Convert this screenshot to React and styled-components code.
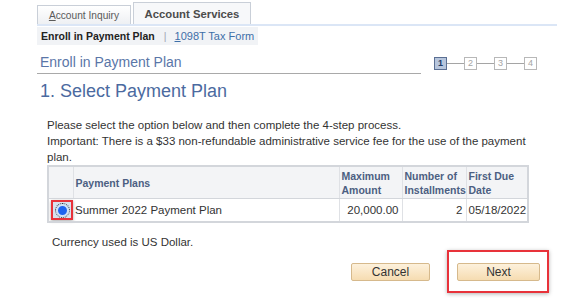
import React from "react";
import styled, { createGlobalStyle } from "styled-components";

const GlobalStyle = createGlobalStyle`
  html, body {
    margin: 0;
    padding: 0;
    background: #ffffff;
    font-family: "Liberation Sans", Arial, sans-serif;
  }
`;

const Page = styled.div`
  width: 580px;
  height: 298px;
  overflow: hidden;
  padding: 2px 0 0 37px;
  box-sizing: border-box;
`;

const TabBar = styled.div`
  display: flex;
  align-items: flex-end;
  gap: 2px;
  width: 520px;
  border-bottom: 2px solid #dbe6f6;
  height: 22px;
`;

const Tab = styled.div`
  box-sizing: border-box;
  width: ${p => p.w};
  height: ${p => (p.active ? "22px" : "19px")};
  display: flex;
  align-items: center;
  justify-content: center;
  border: 1px solid #c9cfd8;
  border-bottom: none;
  background: ${p => (p.active ? "#f7f8fa" : "linear-gradient(#ffffff, #eef0f3)")};
  font-size: ${p => (p.active ? "11.3px" : "10.2px")};
  font-weight: ${p => (p.active ? "bold" : "normal")};
  color: ${p => (p.active ? "#4c4c4c" : "#5a5a5a")};
  u { text-decoration: underline; }
`;

const SubNav = styled.div`
  display: inline-flex;
  align-items: center;
  height: 18px;
  padding: 0 4px;
  background: #f1f3f6;
  font-size: 10.5px;
  font-weight: bold;
  color: #222;
`;

const Sep = styled.span`
  color: #a0a8b4;
  font-weight: normal;
  margin: 0 8px 0 9px;
`;

const SubLink = styled.span`
  color: #3e6fa8;
  font-weight: normal;
  font-size: 11px;
  u { text-decoration: underline; }
`;

const TitleRow = styled.div`
  display: flex;
  align-items: flex-end;
  margin-top: 9px;
  width: 504px;
`;

const PageTitle = styled.div`
  width: 381px;
  padding: 0 0 3px 3px;
  border-bottom: 1px solid #a9a9a9;
  font-size: 14px;
  color: #5a76a8;
`;

const Steps = styled.div`
  display: flex;
  align-items: center;
  margin-left: 13px;
  margin-bottom: 4px;
`;

const Step = styled.div`
  box-sizing: border-box;
  width: 13px;
  height: 13px;
  border: 1px solid ${p => (p.active ? "#5b6f93" : "#b8b8b8")};
  background: ${p => (p.active ? "#b7c6dd" : "#ffffff")};
  color: ${p => (p.active ? "#223a66" : "#a5a5a5")};
  font-size: 9px;
  font-weight: ${p => (p.active ? "bold" : "normal")};
  display: flex;
  align-items: center;
  justify-content: center;
  line-height: 1;
`;

const Link = styled.div`
  width: 17px;
  height: 1px;
  background: #a5a5a5;
`;

const Heading = styled.h1`
  margin: 7px 0 0 3px;
  font-size: 18px;
  font-weight: normal;
  color: #4b6aa0;
`;

const Intro = styled.p`
  margin: 15px 0 0 10px;
  width: 490px;
  font-size: 11.5px;
  line-height: 16px;
  color: #333333;
`;

const Grid = styled.table`
  margin: 0 0 0 10px;
  border-collapse: collapse;
  table-layout: fixed;
  width: 482px;
  border: 2px solid #d3d6db;
`;

const Th = styled.th`
  background: #f3f4f6;
  border-left: 1px solid #dfe1e5;
  border-bottom: 1px solid #d3d6db;
  text-align: left;
  vertical-align: ${p => (p.low ? "middle" : "top")};
  padding: 2px 2px 1px;
  font-size: 10.5px;
  line-height: 14px;
  font-weight: bold;
  color: #4c5f82;
  height: 26px;
`;

const Td = styled.td`
  border-left: 1px solid #dfe1e5;
  height: 22px;
  color: #333333;
  font-size: 11.5px;
  text-align: ${p => (p.right ? "right" : "left")};
  padding: 0 ${p => (p.right ? "3px" : "2px")} 0 2px;
`;

const RadioCell = styled.td`
  padding: 0 0 0 2px;
  height: 22px;
`;

const RadioFocus = styled.div`
  box-sizing: border-box;
  width: 22px;
  height: 20px;
  border: 2px solid #e8323a;
  display: flex;
  align-items: center;
  justify-content: center;
  background: #d7e2ee;
  box-shadow: 0 1px 3px rgba(0, 0, 0, 0.35);
`;

const RadioDot = styled.div`
  box-sizing: border-box;
  width: 13px;
  height: 13px;
  border-radius: 50%;
  border: 2px solid #cfe0f6;
  background: #1e63ee;
  outline: 1px dotted #333;
`;

const Note = styled.div`
  margin: 13px 0 0 15px;
  font-size: 11.5px;
  color: #333333;
`;

const Actions = styled.div`
  display: flex;
  align-items: center;
  margin: 2px 0 0 314px;
`;

const Btn = styled.button`
  box-sizing: border-box;
  width: ${p => p.w};
  height: 18px;
  border: 1px solid #d6b98c;
  border-radius: 2px;
  background: linear-gradient(#fdf1dc, #f6dcb1);
  font-family: "Liberation Sans", Arial, sans-serif;
  font-size: 12px;
  color: #333333;
  padding: 0;
`;

const Highlight = styled.div`
  margin-left: 17px;
  padding: 10px 7px 10px 8px;
  border: 2px solid #e8323a;
  box-shadow: 0 1px 4px rgba(0, 0, 0, 0.3);
`;

const App = () => (
  <>
    <GlobalStyle />
    <Page>
      <TabBar>
        <Tab w="94px">
          <span><u>A</u>ccount Inquiry</span>
        </Tab>
        <Tab active w="118px">Account Services</Tab>
      </TabBar>
      <SubNav>
        Enroll in Payment Plan
        <Sep>|</Sep>
        <SubLink><u>1</u>098T Tax Form</SubLink>
      </SubNav>
      <TitleRow>
        <PageTitle>Enroll in Payment Plan</PageTitle>
        <Steps>
          <Step active>1</Step>
          <Link />
          <Step>2</Step>
          <Link />
          <Step>3</Step>
          <Link />
          <Step>4</Step>
        </Steps>
      </TitleRow>
      <Heading>1. Select Payment Plan</Heading>
      <Intro>
        Please select the option below and then complete the 4-step process.
        <br />
        Important: There is a $33 non-refundable administrative service fee for the use of the payment plan.
      </Intro>
      <Grid>
        <colgroup>
          <col style={{ width: "25px" }} />
          <col style={{ width: "266px" }} />
          <col style={{ width: "63px" }} />
          <col style={{ width: "64px" }} />
          <col />
        </colgroup>
        <thead>
          <tr>
            <Th style={{ borderLeft: "none" }} />
            <Th low>Payment Plans</Th>
            <Th>Maximum Amount</Th>
            <Th>Number of Installments</Th>
            <Th>First Due Date</Th>
          </tr>
        </thead>
        <tbody>
          <tr>
            <RadioCell>
              <RadioFocus>
                <RadioDot />
              </RadioFocus>
            </RadioCell>
            <Td style={{ borderLeft: "none" }}>Summer 2022 Payment Plan</Td>
            <Td right>20,000.00</Td>
            <Td right>2</Td>
            <Td>05/18/2022</Td>
          </tr>
        </tbody>
      </Grid>
      <Note>Currency used is US Dollar.</Note>
      <Actions>
        <Btn w="79px">Cancel</Btn>
        <Highlight>
          <Btn w="83px">Next</Btn>
        </Highlight>
      </Actions>
    </Page>
  </>
);

export default App;
